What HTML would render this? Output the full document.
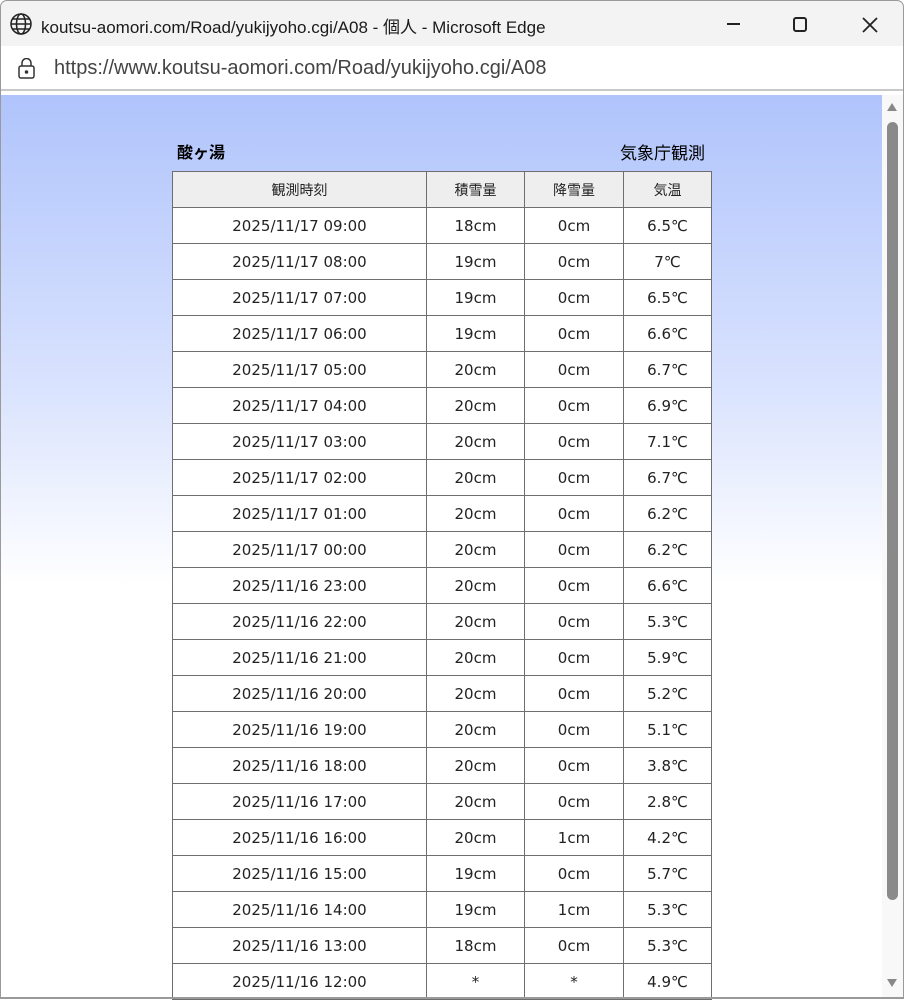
<!DOCTYPE html>
<html><head><meta charset="utf-8"><style>
*{margin:0;padding:0;box-sizing:border-box}
body{width:904px;height:999px;overflow:hidden;background:#fff;font-family:"Liberation Sans","Noto Sans CJK JP",sans-serif;position:relative}
#tb{position:absolute;left:0;top:0;width:904px;height:46px;background:#f3f3f3;border:1px solid #9a9a9a;border-bottom:none;border-radius:7px 7px 0 0}
#tb .t{position:absolute;left:40px;top:12px;font-size:17px;color:#1a1a1a}
#ab{position:absolute;left:0;top:46px;width:904px;height:45px;background:#fff;border-left:1px solid #9a9a9a;border-right:1px solid #9a9a9a;border-bottom:2px solid #c8c8c8}
#ab .u{position:absolute;left:53px;top:11px;font-size:20px;color:#444}
#ct{position:absolute;left:1px;top:95px;width:881px;height:903px;background:linear-gradient(#b0c4fc 0px,#dbe4fe 300px,#fff 490px,#fff)}
#sb{position:absolute;left:882px;top:95px;width:21px;height:903px;background:#f8f8f8}
#sb .th{position:absolute;left:5px;top:27px;width:11px;height:778px;background:#8a8a8a;border-radius:6px}
.h1{position:absolute;left:177px;top:139px;font-size:16px;font-weight:bold;color:#000}
.h2{position:absolute;right:199px;top:139px;font-size:17px;color:#000}
table{position:absolute;left:172px;top:171px;border-collapse:collapse;background:#fff;font-size:15px;color:#222;font-family:"DejaVu Sans","Noto Sans CJK JP",sans-serif}
td,th{border:1px solid #6e6e6e;height:36px;text-align:center;font-weight:normal;padding:0}
th{background:#eeeeee;font-size:14px;font-family:"Noto Sans CJK JP",sans-serif}
</style></head><body>
<div id="tb">
<svg style="position:absolute;left:8px;top:11px" width="24" height="24" viewBox="0 0 24 24" fill="none" stroke="#222" stroke-width="1.5"><circle cx="12" cy="12" r="10"/><ellipse cx="12" cy="12" rx="4.5" ry="10"/><path d="M2 12h20M3.5 7h17M3.5 17h17"/></svg>
<div class="t">koutsu-aomori.com/Road/yukijyoho.cgi/A08 - 個人 - Microsoft Edge</div>
<div style="position:absolute;left:726px;top:22px;width:13px;height:2px;background:#222"></div>
<div style="position:absolute;left:792px;top:16px;width:14px;height:15px;border:2px solid #222;border-radius:3px"></div>
<svg style="position:absolute;left:861px;top:16px" width="16" height="16" viewBox="0 0 16 16" stroke="#222" stroke-width="1.8"><path d="M1 1L15 15M15 1L1 15"/></svg>
</div>
<div id="ab">
<svg style="position:absolute;left:16px;top:12px" width="20" height="22" viewBox="0 0 20 22" fill="none" stroke="#333" stroke-width="1.5"><rect x="2" y="8" width="15" height="12" rx="2"/><path d="M5 8V5a4.5 4.5 0 0 1 9 0v3"/><circle cx="9.5" cy="14" r="1" fill="#333"/></svg>
<div class="u">https://www.koutsu-aomori.com/Road/yukijyoho.cgi/A08</div>
</div>
<div id="ct"></div>
<div id="sb"><div style="position:absolute;left:5px;top:8px;border-left:5px solid transparent;border-right:5px solid transparent;border-bottom:8px solid #888"></div><div class="th"></div><div style="position:absolute;left:5px;top:884px;border-left:5px solid transparent;border-right:5px solid transparent;border-top:8px solid #888"></div></div>
<div class="h1">酸ヶ湯</div><div class="h2">気象庁観測</div>
<table>
<tr><th style="width:254px;height:36px">観測時刻</th><th style="width:98px">積雪量</th><th style="width:99px">降雪量</th><th style="width:88px">気温</th></tr>
<tr><td>2025/11/17 09:00</td><td>18cm</td><td>0cm</td><td>6.5℃</td></tr>
<tr><td>2025/11/17 08:00</td><td>19cm</td><td>0cm</td><td>7℃</td></tr>
<tr><td>2025/11/17 07:00</td><td>19cm</td><td>0cm</td><td>6.5℃</td></tr>
<tr><td>2025/11/17 06:00</td><td>19cm</td><td>0cm</td><td>6.6℃</td></tr>
<tr><td>2025/11/17 05:00</td><td>20cm</td><td>0cm</td><td>6.7℃</td></tr>
<tr><td>2025/11/17 04:00</td><td>20cm</td><td>0cm</td><td>6.9℃</td></tr>
<tr><td>2025/11/17 03:00</td><td>20cm</td><td>0cm</td><td>7.1℃</td></tr>
<tr><td>2025/11/17 02:00</td><td>20cm</td><td>0cm</td><td>6.7℃</td></tr>
<tr><td>2025/11/17 01:00</td><td>20cm</td><td>0cm</td><td>6.2℃</td></tr>
<tr><td>2025/11/17 00:00</td><td>20cm</td><td>0cm</td><td>6.2℃</td></tr>
<tr><td>2025/11/16 23:00</td><td>20cm</td><td>0cm</td><td>6.6℃</td></tr>
<tr><td>2025/11/16 22:00</td><td>20cm</td><td>0cm</td><td>5.3℃</td></tr>
<tr><td>2025/11/16 21:00</td><td>20cm</td><td>0cm</td><td>5.9℃</td></tr>
<tr><td>2025/11/16 20:00</td><td>20cm</td><td>0cm</td><td>5.2℃</td></tr>
<tr><td>2025/11/16 19:00</td><td>20cm</td><td>0cm</td><td>5.1℃</td></tr>
<tr><td>2025/11/16 18:00</td><td>20cm</td><td>0cm</td><td>3.8℃</td></tr>
<tr><td>2025/11/16 17:00</td><td>20cm</td><td>0cm</td><td>2.8℃</td></tr>
<tr><td>2025/11/16 16:00</td><td>20cm</td><td>1cm</td><td>4.2℃</td></tr>
<tr><td>2025/11/16 15:00</td><td>19cm</td><td>0cm</td><td>5.7℃</td></tr>
<tr><td>2025/11/16 14:00</td><td>19cm</td><td>1cm</td><td>5.3℃</td></tr>
<tr><td>2025/11/16 13:00</td><td>18cm</td><td>0cm</td><td>5.3℃</td></tr>
<tr><td>2025/11/16 12:00</td><td>*</td><td>*</td><td>4.9℃</td></tr>
</table>
<div style="position:absolute;left:0;top:997px;width:904px;height:2px;background:#9a9a9a"></div>
<div style="position:absolute;left:0;top:46px;width:1px;height:953px;background:#9a9a9a"></div>
<div style="position:absolute;left:903px;top:46px;width:1px;height:953px;background:#9a9a9a"></div>
</body></html>
